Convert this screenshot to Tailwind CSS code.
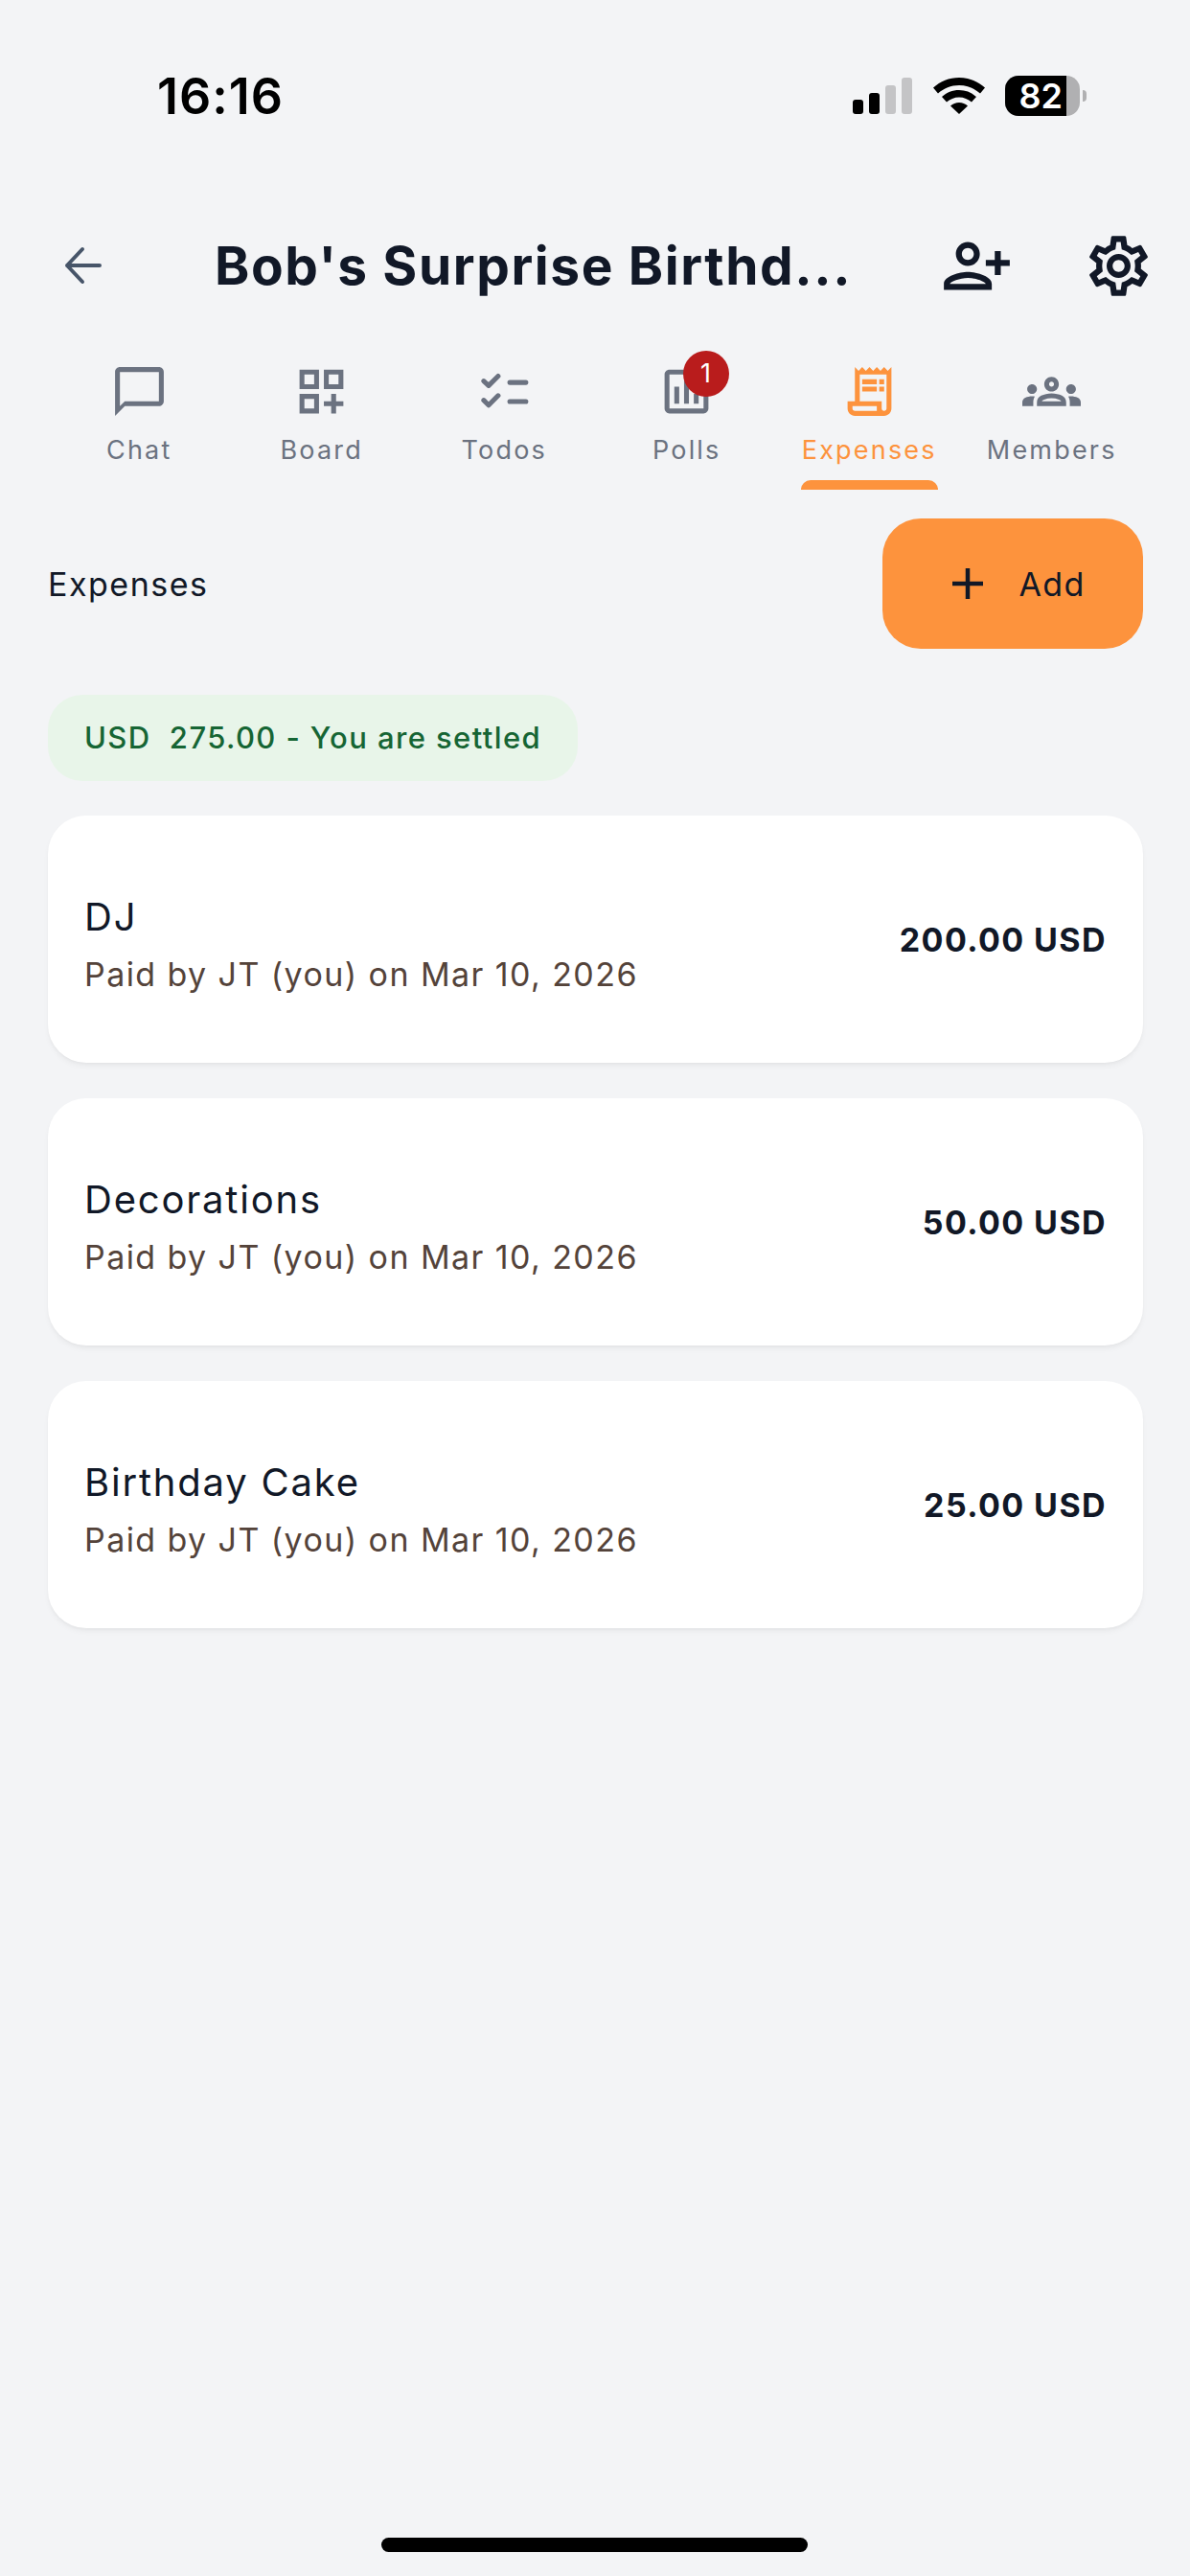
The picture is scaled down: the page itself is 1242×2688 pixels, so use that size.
<!DOCTYPE html>
<html lang="en">
<head>
  <meta charset="UTF-8" />
  <meta name="viewport" content="width=device-width, initial-scale=1" />
  <title>Expenses</title>
  <script src="https://cdn.jsdelivr.net/npm/@tailwindcss/browser@4"></script>
</head>
<body class="bg-[#f3f4f6] font-['Inter',sans-serif] text-[#111827]">
  <div class="relative w-[1242px] h-[2688px] overflow-hidden">

    <!-- Status bar -->
    <div class="flex items-center h-[200px] pl-[164px] pr-[108px]">
      <span class="text-[52px] font-semibold text-black leading-none tracking-[1px] pt-[2px]">16:16</span>
      <div class="ml-auto flex items-center">
        <svg width="62" height="38" viewBox="0 0 62 38" class="mr-[22px]">
          <rect x="0" y="23" width="11" height="15" rx="3" fill="#000" />
          <rect x="17" y="16" width="11" height="22" rx="3" fill="#000" />
          <rect x="34" y="8" width="11" height="30" rx="3" fill="#c4c4c6" />
          <rect x="51" y="0" width="11" height="38" rx="3" fill="#c4c4c6" />
        </svg>
        <svg width="54" height="38" viewBox="0 0 54 38" class="mr-[21px]">
          <path d="M27 0C16.500 0 7.500 4 0 10.500L5 16.500C11 11.200 18.500 8 27 8C35.500 8 43 11.200 49 16.500L54 10.500C46.500 4 37.500 0 27 0Z" fill="#000" />
          <path d="M27 13C20 13 14 15.500 9 20L14 25.500C17.500 22.500 22 20.500 27 20.500C32 20.500 36.500 22.500 40 25.500L45 20C40 15.500 34 13 27 13Z" fill="#000" />
          <path d="M27 26C23.500 26 20.500 27.200 18 29.500L27 38L36 29.500C33.500 27.200 30.500 26 27 26Z" fill="#000" />
        </svg>
        <div class="relative flex items-center">
          <div class="flex w-[78px] h-[42px] rounded-[14px] overflow-hidden bg-[#b0b0b2]">
            <div class="w-[64px] h-full bg-black text-white text-[36px] font-semibold leading-[42px] text-right pr-[4px]">82</div>
          </div>
          <div class="w-[4px] h-[12px] ml-[3px] rounded-r-full bg-[#b0b0b2]"></div>
        </div>
      </div>
    </div>

    <!-- Header -->
    <div class="flex items-center h-[154px] pr-[37px]">
      <button class="w-[224px] pl-[66px]">
        <svg width="41" height="40" viewBox="0 0 41 40" fill="none" stroke="#475569" stroke-width="4" stroke-linecap="round" stroke-linejoin="round">
          <path d="M20 3 4 20l16 17M4 20h34" />
        </svg>
      </button>
      <h1 class="flex-1 text-[55px] font-bold leading-none text-[#111827] tracking-[1.6px] whitespace-nowrap">Bob's Surprise Birthd...</h1>
      <svg width="75" height="75" viewBox="0 0 24 24" fill="#111827" class="-scale-x-100">
        <path d="M15 12c2.210 0 4-1.790 4-4s-1.790-4-4-4-4 1.790-4 4 1.790 4 4 4zm0-6c1.100 0 2 .9 2 2s-.9 2-2 2-2-.9-2-2 .9-2 2-2zm0 8c-2.670 0-8 1.340-8 4v2h16v-2c0-2.660-5.330-4-8-4zm-6 4c.22-.72 3.310-2 6-2 2.700 0 5.800 1.290 6 2H9zm-3-3v-3h3v-2H6V7H4v3H1v2h3v3h2z" />
      </svg>
      <svg width="75" height="75" viewBox="0 0 24 24" fill="#111827" class="ml-[73px]">
        <path d="M19.430 12.980c.04-.32.07-.64.07-.98 0-.34-.03-.66-.07-.98l2.110-1.650c.19-.15.24-.42.12-.64l-2-3.460c-.09-.16-.26-.25-.44-.25-.06 0-.12.01-.17.03l-2.490 1c-.52-.4-1.080-.73-1.690-.98l-.38-2.650C14.460 2.180 14.250 2 14 2h-4c-.25 0-.46.18-.49.42l-.38 2.650c-.61.25-1.170.59-1.690.98l-2.490-1c-.06-.02-.12-.03-.18-.03-.17 0-.34.09-.43.25l-2 3.460c-.13.22-.07.49.12.64l2.110 1.650c-.04.32-.07.65-.07.98 0 .33.03.66.07.98l-2.110 1.650c-.19.15-.24.42-.12.64l2 3.460c.09.16.26.25.44.25.06 0 .12-.01.17-.03l2.490-1c.52.4 1.080.73 1.690.98l.38 2.650c.03.24.24.42.49.42h4c.25 0 .46-.18.49-.42l.38-2.650c.61-.25 1.170-.59 1.690-.98l2.490 1c.06.02.12.03.18.03.17 0 .34-.09.43-.25l2-3.460c.12-.22.07-.49-.12-.64l-2.110-1.650zm-1.980-1.710c.04.31.05.52.05.73 0 .21-.02.43-.05.73l-.14 1.130.89.7 1.080.84-.7 1.210-1.270-.51-1.040-.42-.9.68c-.43.32-.84.56-1.250.73l-1.060.43-.16 1.130-.2 1.350h-1.400l-.19-1.350-.16-1.130-1.060-.43c-.43-.18-.83-.41-1.230-.71l-.91-.7-1.060.43-1.270.51-.7-1.210 1.080-.84.89-.7-.14-1.130c-.03-.31-.05-.54-.05-.74s.02-.43.05-.73l.14-1.130-.89-.7-1.080-.84.7-1.210 1.270.51 1.040.42.9-.68c.43-.32.84-.56 1.250-.73l1.060-.43.16-1.130.2-1.350h1.390l.19 1.350.16 1.130 1.060.43c.43.18.83.41 1.230.71l.91.7 1.060-.43 1.270-.51.7 1.210-1.070.85-.89.7.14 1.130zM12 8c-2.210 0-4 1.790-4 4s1.790 4 4 4 4-1.790 4-4-1.790-4-4-4zm0 6c-1.100 0-2-.9-2-2s.9-2 2-2 2 .9 2 2-.9 2-2 2z" />
      </svg>
    </div>

    <!-- Tabs -->
    <div class="grid grid-cols-6 pl-[50px] pr-[49px] h-[157px] text-[#6b7280] text-[27px] font-[370] tracking-[2.2px]">
      <div class="flex flex-col items-center pt-[24px]">
        <svg width="61" height="61" viewBox="0 0 24 24" fill="currentColor">
          <path d="M20 2H4c-1.100 0-2 .9-2 2v18l4-4h14c1.100 0 2-.9 2-2V4c0-1.100-.9-2-2-2zm0 14H6l-2 2V4h16v12z" />
        </svg>
        <span class="mt-[15px] leading-[32px]">Chat</span>
      </div>
      <div class="flex flex-col items-center pt-[24px]">
        <svg width="61" height="61" viewBox="0 0 24 24" fill="currentColor">
          <path d="M3 11h8V3H3v8zm2-6h4v4H5V5zM13 3v8h8V3h-8zm6 6h-4V5h4v4zM3 21h8v-8H3v8zm2-6h4v4H5v-4zM18 13h-2v3h-3v2h3v3h2v-3h3v-2h-3z" />
        </svg>
        <span class="mt-[15px] leading-[32px]">Board</span>
      </div>
      <div class="flex flex-col items-center pt-[24px]">
        <svg width="61" height="61" viewBox="0 0 24 24" fill="none" stroke="currentColor" stroke-width="2" stroke-linecap="round" stroke-linejoin="round">
          <path d="M3.500 7.700 5.500 9.600 9.400 5.700M3.500 15.600l2 2 3.900-3.900M14.200 8.300h6.600M14.200 16.100h6.600" />
        </svg>
        <span class="mt-[15px] leading-[32px]">Todos</span>
      </div>
      <div class="relative flex flex-col items-center pt-[24px]">
        <svg width="61" height="61" viewBox="0 0 24 24" fill="currentColor">
          <path d="M19 3H5c-1.100 0-2 .9-2 2v14c0 1.100.9 2 2 2h14c1.100 0 2-.9 2-2V5c0-1.100-.9-2-2-2zm0 16H5V5h14v14zM7 10h2v7H7zm4-3h2v10h-2zm4 6h2v4h-2z" />
        </svg>
        <span class="mt-[15px] leading-[32px]">Polls</span>
        <span class="absolute left-[91px] top-[12px] w-[48px] h-[48px] rounded-full bg-[#b91c1c] text-white text-[27px] tracking-normal leading-[48px] text-center">1</span>
      </div>
      <div class="relative flex flex-col items-center pt-[24px] text-[#fd933d]">
        <svg width="61" height="61" viewBox="0 0 24 24" fill="currentColor">
          <path d="M19.500 3.500 18 2l-1.500 1.500L15 2l-1.500 1.500L12 2l-1.500 1.500L9 2 7.500 3.500 6 2v14H3v3c0 1.660 1.340 3 3 3h12c1.660 0 3-1.340 3-3V2l-1.500 1.500zM15 20H6c-.55 0-1-.45-1-1v-1h10v2zm4-1c0 .55-.45 1-1 1s-1-.45-1-1v-3H8V5h11v14z" />
          <path d="M9 7h6v2H9zm7 0h2v2h-2zM9 10h6v2H9zm7 0h2v2h-2z" />
        </svg>
        <span class="mt-[15px] leading-[32px]">Expenses</span>
        <div class="absolute bottom-0 left-[24px] w-[143px] h-[10px] rounded-t-[10px] bg-[#fd933d]"></div>
      </div>
      <div class="flex flex-col items-center pt-[24px]">
        <svg width="61" height="61" viewBox="0 0 24 24" fill="currentColor">
          <path d="M4 13c1.100 0 2-.9 2-2s-.9-2-2-2-2 .9-2 2 .9 2 2 2zm1.130 1.100C4.760 14.040 4.390 14 4 14c-.99 0-1.930.21-2.780.58C.48 14.900 0 15.620 0 16.430V18h4.500v-1.610c0-.83.23-1.610.63-2.290zM20 13c1.100 0 2-.9 2-2s-.9-2-2-2-2 .9-2 2 .9 2 2 2zm4 3.430c0-.81-.48-1.530-1.220-1.850C21.930 14.210 20.990 14 20 14c-.39 0-.76.04-1.130.1.4.68.63 1.460.63 2.290V18H24v-1.570zM16.240 13.650c-1.170-.52-2.610-.9-4.240-.9s-3.070.39-4.240.9C6.680 14.130 6 15.210 6 16.390V18h12v-1.610c0-1.180-.68-2.260-1.760-2.740zM8.070 16c.09-.23.13-.39.91-.69.97-.38 1.990-.56 3.020-.56s2.050.18 3.020.56c.77.3.81.46.91.69H8.070zM12 8c.55 0 1 .45 1 1s-.45 1-1 1-1-.45-1-1 .45-1 1-1m0-2c-1.660 0-3 1.340-3 3s1.340 3 3 3 3-1.340 3-3-1.340-3-3-3z" />
        </svg>
        <span class="mt-[15px] leading-[32px]">Members</span>
      </div>
    </div>

    <!-- Content -->
    <div class="pl-[50px] pr-[49px] pt-[30px]">
      <div class="flex items-center justify-between">
        <span class="text-[34px] font-[370] tracking-[1.5px]">Expenses</span>
        <button class="flex items-center justify-center gap-[37px] pl-[11px] w-[272px] h-[136px] rounded-[40px] bg-[#fd933d] text-[34px] font-normal tracking-[1.3px]">
          <svg width="34" height="34" viewBox="0 0 34 34" fill="none" stroke="#111827" stroke-width="4.500">
            <path d="M17 1v32M1 17h32" />
          </svg>
          <span>Add</span>
        </button>
      </div>

      <div class="inline-block mt-[48px] px-[38px] h-[90px] rounded-[36px] bg-[#e8f5e9] text-[#166534] text-[31px] font-[470] leading-[90px] tracking-[1.4px] whitespace-pre">USD  275.00 - You are settled</div>

      <div class="flex flex-col gap-[37px] mt-[36px]">
        <div class="flex items-center justify-between h-[258px] px-[38px] rounded-[40px] bg-white shadow-md shadow-black/5">
          <div class="pt-[14px]">
            <div class="text-[40px] font-[370] leading-[46px] tracking-[1.8px]">DJ</div>
            <div class="mt-[14px] text-[34px] font-[370] leading-[46px] tracking-[1.42px] text-[#54433a]">Paid by JT (you) on Mar 10, 2026</div>
          </div>
          <div class="text-[34px] font-bold tracking-[1.4px]">200.00 USD</div>
        </div>
        <div class="flex items-center justify-between h-[258px] px-[38px] rounded-[40px] bg-white shadow-md shadow-black/5">
          <div class="pt-[14px]">
            <div class="text-[40px] font-[370] leading-[46px] tracking-[1.8px]">Decorations</div>
            <div class="mt-[14px] text-[34px] font-[370] leading-[46px] tracking-[1.42px] text-[#54433a]">Paid by JT (you) on Mar 10, 2026</div>
          </div>
          <div class="text-[34px] font-bold tracking-[1.4px]">50.00 USD</div>
        </div>
        <div class="flex items-center justify-between h-[258px] px-[38px] rounded-[40px] bg-white shadow-md shadow-black/5">
          <div class="pt-[14px]">
            <div class="text-[40px] font-[370] leading-[46px] tracking-[1.8px]">Birthday Cake</div>
            <div class="mt-[14px] text-[34px] font-[370] leading-[46px] tracking-[1.42px] text-[#54433a]">Paid by JT (you) on Mar 10, 2026</div>
          </div>
          <div class="text-[34px] font-bold tracking-[1.4px]">25.00 USD</div>
        </div>
      </div>
    </div>

    <!-- Home indicator -->
    <div class="absolute left-[398px] bottom-[25px] w-[445px] h-[15px] rounded-full bg-black"></div>
  </div>
</body>
</html>
